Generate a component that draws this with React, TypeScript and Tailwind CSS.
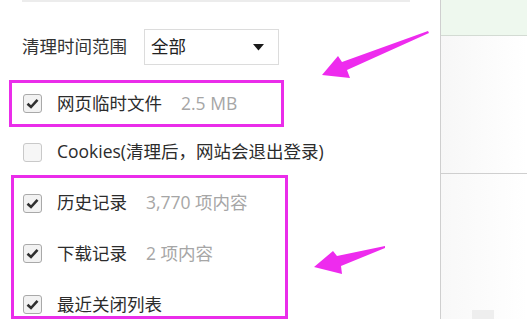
import React from 'react'

const font = { fontFamily: '"Open Sans", "Noto Sans CJK SC", sans-serif' }

function Check({ on = true }: { on?: boolean }) {
  return (
    <span
      className={`flex h-[19px] w-[19px] shrink-0 items-center justify-center rounded-[3px] border ${
        on ? 'border-[#a9a9a9] bg-[#f2f2f2]' : 'border-[#c9c9c9] bg-[#f6f6f6]'
      }`}
    >
      {on && (
        <svg width="13" height="11" viewBox="0 0 13 11">
          <path d="M1.5 5.8 L5 9 L11.5 1.8" fill="none" stroke="#2f2f2f" strokeWidth="2.6" />
        </svg>
      )}
    </span>
  )
}

function Row({ label, meta, on = true, h = 'h-[50px]' }: { label: string; meta?: string; on?: boolean; h?: string }) {
  return (
    <div className={`flex ${h} shrink-0 items-center gap-[15px]`}>
      <Check on={on} />
      <span className="text-[#2c2c2c]">{label}</span>
      {meta && <span className="ml-[4px] text-[#a6a6a6]">{meta}</span>}
    </div>
  )
}

export default function App() {
  return (
    <div className="relative flex h-[319px] w-[527px] overflow-hidden bg-white text-[17.5px] leading-none" style={font}>
      {/* left settings panel */}
      <div className="flex w-[441px] shrink-0 flex-col border-r border-[#cfcfcf]">
        <div className="ml-[22px] h-[2px] w-[388px] bg-[#ececec]" />

        <div className="mt-[27px] flex h-[36px] items-center pl-[22px]">
          <span className="w-[122px] text-[#333]">清理时间范围</span>
          <div className="flex h-[36px] w-[135px] items-center justify-between border border-[#dcdcdc] pl-[6px] pr-[14px] text-[#222]">
            <span>全部</span>
            <svg width="11" height="7" viewBox="0 0 11 7">
              <path d="M0 0 H11 L5.5 6.5 Z" fill="#1a1a1a" />
            </svg>
          </div>
        </div>

        <div className="ml-[9px] mt-[15px] flex h-[47px] w-[275px] items-center border-[3px] border-[#ea2dea] pl-[11px]">
          <Row label="网页临时文件" meta="2.5 MB" h="h-[41px]" />
        </div>

        <div className="flex h-[48px] items-center pl-[23px] pt-[2px]">
          <Row label="Cookies(清理后，网站会退出登录)" on={false} h="h-[46px]" />
        </div>

        <div className="ml-[11px] flex h-[144px] w-[277px] flex-col overflow-hidden border-[3px] border-[#ea2dea] pl-[9px]">
          <Row label="历史记录" meta="3,770 项内容" h="h-[50px]" />
          <Row label="下载记录" meta="2 项内容" h="h-[51px]" />
          <Row label="最近关闭列表" h="h-[51px]" />
        </div>
      </div>

      {/* right background panel */}
      <div className="relative flex flex-1 flex-col">
        <div className="h-[36px] border-b border-[#d3dbd3] bg-[#eef8ee]" />
        <div className="h-[138px] border-b border-[#cfcfcf] bg-gradient-to-r from-[#f7f7f7] to-white" />
        <div className="flex-1 bg-gradient-to-r from-[#f8f8f8] to-white" />
        <div className="absolute bottom-0 left-[31px] h-[9px] w-[22px] bg-[#eeeeee]" />
      </div>

      {/* annotation arrows */}
      <svg className="pointer-events-none absolute inset-0" width="527" height="319" viewBox="0 0 527 319">
        <polygon points="322,75 338,56 342,62 428,31 429,33 347,70 350,78" fill="#ee2bee" />
        <polygon points="314,267 333,251 337,256 385,246 385,248 341,266 342,274" fill="#ee2bee" />
      </svg>
    </div>
  )
}
